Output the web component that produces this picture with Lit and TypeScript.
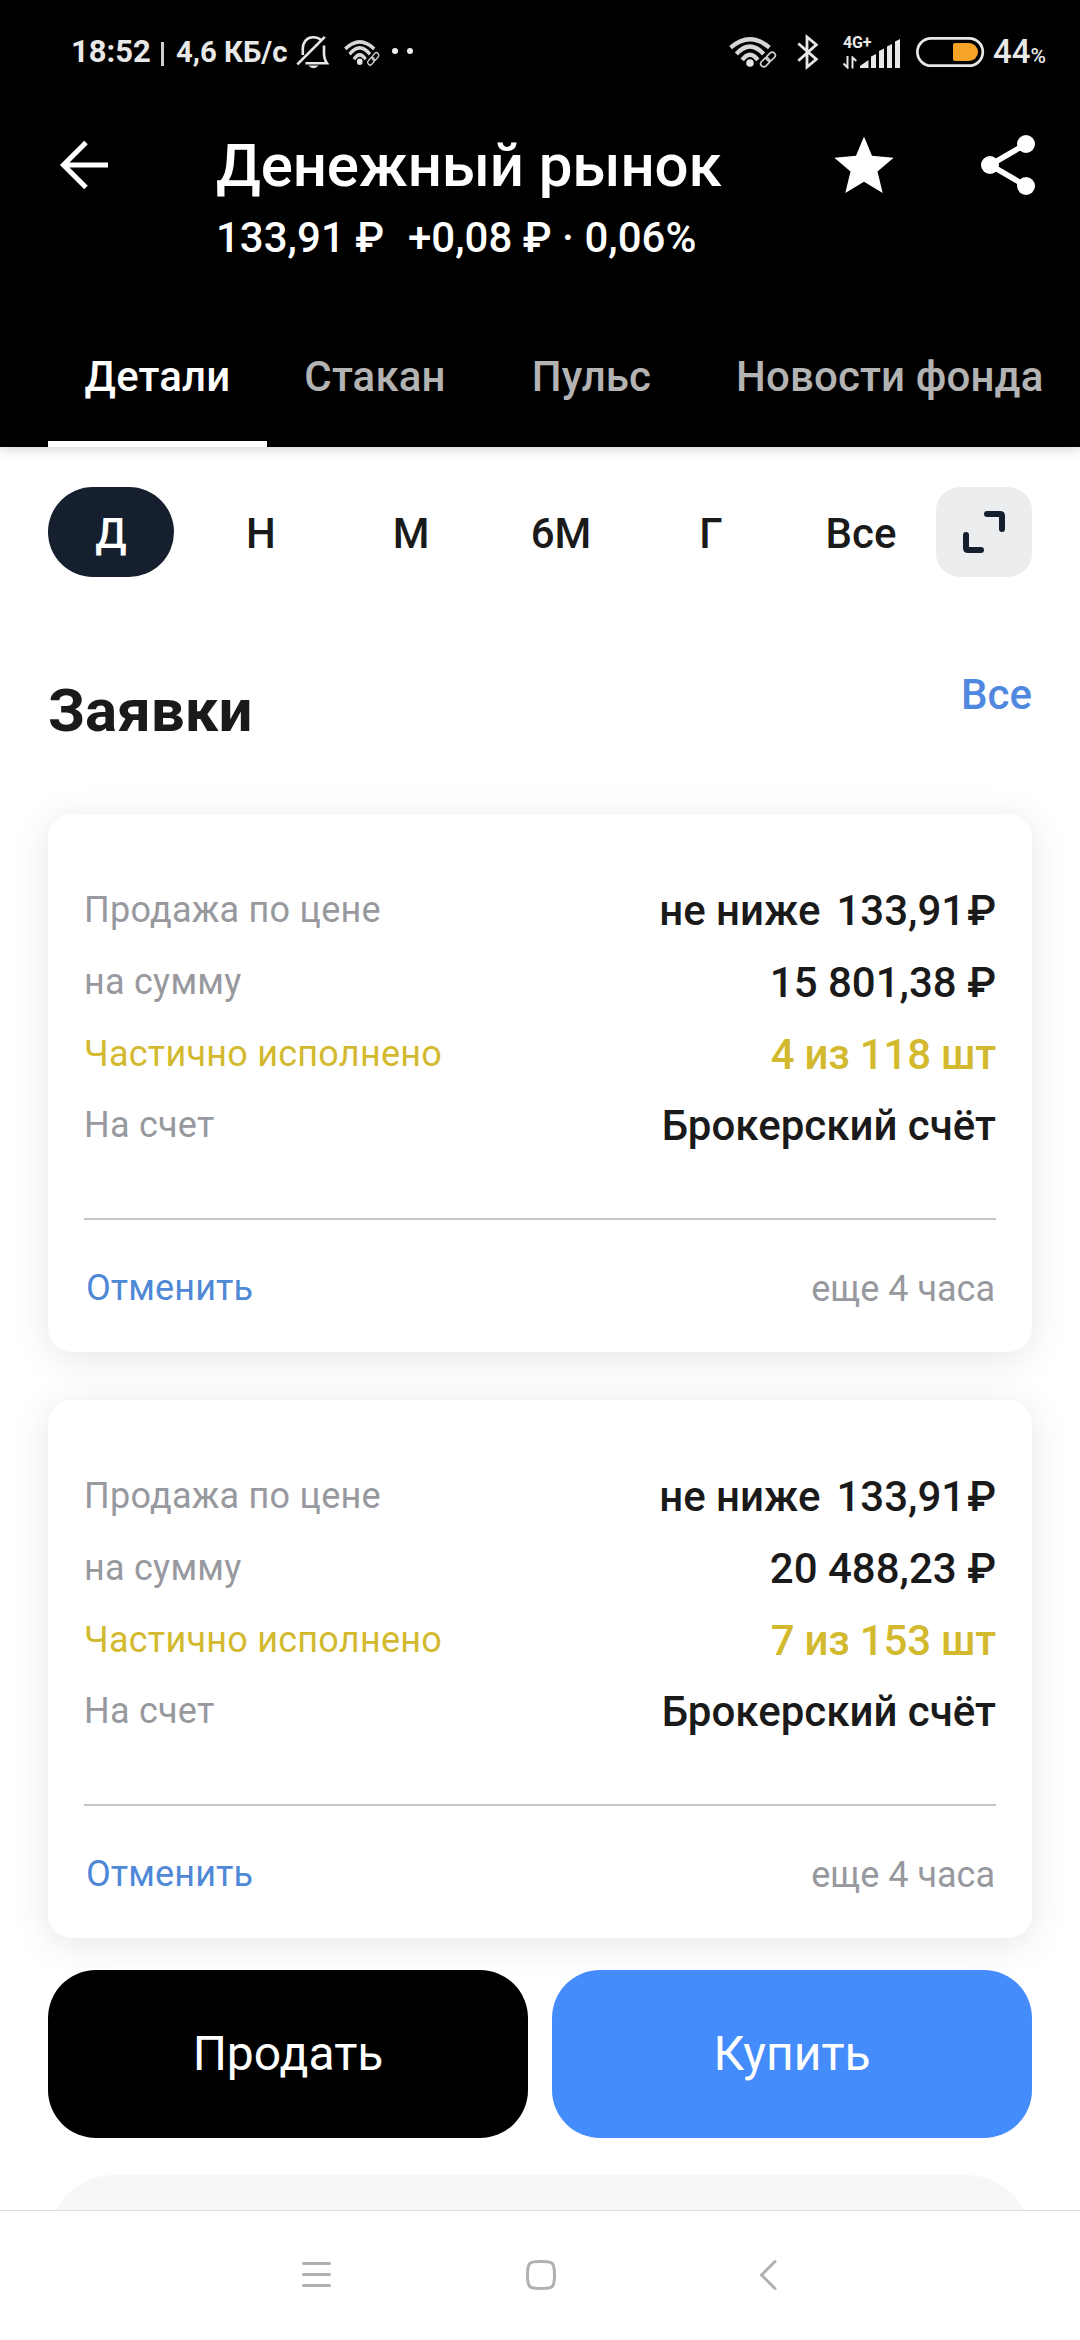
import { LitElement, html, svg, css } from "lit";
import { customElement, property, state } from "lit/decorators.js";
import { classMap } from "lit/directives/class-map.js";

interface Order {
  price: string;
  sum: string;
  filled: string;
  account: string;
  left: string;
}

const ORDERS: Order[] = [
  { price: "133,91", sum: "15 801,38 ₽", filled: "4 из 118 шт", account: "Брокерский счёт", left: "еще 4 часа" },
  { price: "133,91", sum: "20 488,23 ₽", filled: "7 из 153 шт", account: "Брокерский счёт", left: "еще 4 часа" },
];

const TABS = ["Детали", "Стакан", "Пульс", "Новости фонда"];
const PERIODS = ["Д", "Н", "М", "6М", "Г", "Все"];

const wifiShapes = svg`
  <g fill="none" stroke="#d6d6d6" stroke-width="4.3">
    <path d="M729.6 46.6 Q749 30 768.4 46.6" />
    <path d="M735.4 53 Q749 38 762.6 53" />
    <path d="M741.2 59 Q749 48.5 756.8 59" />
  </g>
  <circle cx="749" cy="62" r="3.8" fill="#e4e4e4" />
  <g transform="rotate(-45 767 58.5)">
    <rect x="757" y="53.6" width="20" height="10" rx="5" fill="#000" />
    <g fill="none" stroke="#d0d0d0" stroke-width="1.7">
      <rect x="758" y="55.4" width="10" height="6.2" rx="3.1" />
      <rect x="766" y="55.4" width="10" height="6.2" rx="3.1" />
    </g>
  </g>`;

@customElement("status-bar")
export class StatusBar extends LitElement {
  static styles = css`
    :host {
      display: flex;
      align-items: center;
      height: 104px;
      padding: 0 35px 0 71px;
      box-sizing: border-box;
      color: #e8e8e8;
      font-weight: 700;
      line-height: 40px;
    }
    svg {
      display: block;
      flex: none;
    }
    .time {
      font-size: 31px;
    }
    .bar {
      width: 3px;
      height: 24px;
      margin: 3px 12px 0 10px;
      background: #d0d0d0;
    }
    .speed {
      font-size: 29.3px;
      width: 111px;
      white-space: nowrap;
    }
    .bell {
      margin-left: 8px;
    }
    .wifi-small {
      margin-left: 15px;
    }
    .dots {
      margin-left: 11px;
    }
    .spacer {
      flex: 1;
    }
    .bt {
      margin-left: 19px;
    }
    .cell {
      display: flex;
      align-items: flex-end;
      margin-left: 24px;
    }
    .net {
      display: flex;
      flex-direction: column;
      gap: 6px;
      width: 17px;
    }
    .gen {
      font-size: 16px;
      line-height: 14px;
      letter-spacing: -0.2px;
      white-space: nowrap;
    }
    .battery {
      margin-left: 15px;
    }
    .level {
      display: flex;
      align-items: baseline;
      width: 52px;
      margin-left: 8px;
      font-weight: 500;
      font-size: 33px;
    }
    .percent {
      font-size: 21px;
      line-height: 21px;
    }
  `;

  render() {
    return html`
      <span class="time">18:52</span>
      <span class="bar"></span>
      <span class="speed">4,6 КБ/с</span>
      <svg class="bell" width="34" height="34" viewBox="294 34 34 34" fill="none" stroke="#e8e8e8" stroke-width="2.6">
        <path d="M301.8 54V48C301.8 40.500 306.200 36.300 312 36.300C315 36.300 318 37.200 320 39" />
        <path d="M323 44.500V52C323 57 324.300 60 326 62.200H304.500" />
        <path d="M296.300 63.300L323.800 35.800" />
        <path d="M307.500 64.600H317.500Q315.500 67.200 312.500 67.200T307.500 64.600Z" fill="#e8e8e8" stroke="none" />
      </svg>
      <svg class="wifi-small" width="36" height="27" viewBox="728 35 48 32" preserveAspectRatio="none">${wifiShapes}</svg>
      <svg class="dots" width="22" height="8" viewBox="0 0 22 8" fill="#f0f0f0">
        <circle cx="4" cy="3" r="3" /><circle cx="19" cy="3" r="3" />
      </svg>
      <span class="spacer"></span>
      <svg width="48" height="32" viewBox="728 35 48 32">${wifiShapes}</svg>
      <svg class="bt" width="23" height="36" viewBox="795 33 23 36" fill="none" stroke="#e8e8e8" stroke-width="2.8">
        <path d="M797.300 42.500L815.300 58.300L806 66V36L815.300 43.700L797.300 59.800" />
      </svg>
      <div class="cell">
        <div class="net">
          <span class="gen">4G+</span>
          <svg width="14" height="13" viewBox="842 53 14 13" fill="none" stroke="#e8e8e8" stroke-width="2">
            <path d="M846.500 53V64.500L842.500 60.500M851.500 65.500V54.500L855.300 58" />
          </svg>
        </div>
        <svg width="41" height="30" viewBox="859 36 41 30" fill="#e8e8e8">
          <path
            d="M859 65V63L867.500 57V65ZM870 65V53.500L875 51V65ZM878 65V48L883 45.500V65ZM886 65V43.500L891 41V65ZM894 65V38.500L899 36V65Z"
          />
        </svg>
      </div>
      <svg class="battery" width="69" height="32" viewBox="915 35 69 32">
        <rect x="916.400" y="37.300" width="65.400" height="27.400" rx="13.700" fill="none" stroke="#e8e8e8" stroke-width="2.700" />
        <path d="M954 42H968A9 9 0 0 1 968 60H954Q952 60 952 58V44Q952 42 954 42Z" fill="#f6a428" />
      </svg>
      <div class="level"><span>44</span><span class="percent">%</span></div>
    `;
  }
}

@customElement("fund-header")
export class FundHeader extends LitElement {
  @state() private active = 0;

  static styles = css`
    :host {
      display: block;
      height: 447px;
      background: #000;
      color: #fff;
      box-shadow: 0 3px 12px rgba(0, 0, 0, 0.16);
    }
    .toolbar {
      display: flex;
      height: 171px;
      padding: 26px 45px 0 58px;
      box-sizing: border-box;
    }
    svg {
      display: block;
      flex: none;
    }
    .back {
      margin-top: 10px;
    }
    .titles {
      flex: 1;
      margin-left: 108px;
      font-weight: 500;
    }
    .title {
      margin: 0;
      font-size: 60px;
      font-weight: 500;
      line-height: 71px;
      letter-spacing: -0.15px;
    }
    .quote {
      display: flex;
      gap: 24px;
      font-size: 42px;
      line-height: 74px;
    }
    .star {
      margin-top: 5px;
    }
    .share {
      margin: 4px 0 0 85px;
    }
    .tabs {
      display: grid;
      grid-template-columns: 219px 216px 217px max-content;
      height: 141px;
      margin-top: 31px;
      padding-left: 48px;
      overflow: hidden;
    }
    .tab {
      box-sizing: border-box;
      padding: 0 36px;
      border-bottom: 6px solid transparent;
      border-top: 6px solid transparent;
      font-size: 42px;
      font-weight: 500;
      line-height: 129px;
      letter-spacing: 0.15px;
      text-align: center;
      white-space: nowrap;
      color: #b3b3b3;
    }
    .tab.active {
      color: #fff;
      border-bottom-color: #fff;
    }
  `;

  render() {
    return html`
      <status-bar></status-bar>
      <div class="toolbar">
        <svg class="back" width="50" height="50" viewBox="58 140 50 50" fill="none" stroke="#fff" stroke-width="5">
          <path d="M86 142.500L63.500 165L86 187.500M64 165H108" />
        </svg>
        <div class="titles">
          <h1 class="title">Денежный рынок</h1>
          <div class="quote"><span>133,91 ₽</span><span>+0,08 ₽ · 0,06%</span></div>
        </div>
        <svg class="star" width="60" height="60" viewBox="834 135 60 60" fill="#fff">
          <path
            d="M864 136.500L872 155.700L893.700 157.800L877.500 171.500L882.700 193L864 181.700L845.300 193L850.500 171.500L834.300 157.800L856 155.700Z"
          />
        </svg>
        <svg class="share" width="56" height="62" viewBox="979 134 56 62">
          <path d="M1026 144L990 165L1026 186" fill="none" stroke="#fff" stroke-width="5.600" />
          <circle cx="1026" cy="144" r="9" fill="#fff" />
          <circle cx="990" cy="165" r="9" fill="#fff" />
          <circle cx="1026" cy="186" r="9" fill="#fff" />
        </svg>
      </div>
      <div class="tabs">
        ${TABS.map(
          (t, i) => html`<div class=${classMap({ tab: true, active: i === this.active })} @click=${() => (this.active = i)}>${t}</div>`,
        )}
      </div>
    `;
  }
}

@customElement("period-picker")
export class PeriodPicker extends LitElement {
  @state() private active = 0;

  static styles = css`
    :host {
      display: flex;
      padding: 40px 48px 0;
    }
    .list {
      display: flex;
      gap: 24px;
      flex: 1;
      min-width: 0;
    }
    .period {
      flex: none;
      width: 126px;
      border-radius: 45px;
      font-size: 42px;
      font-weight: 500;
      line-height: 94px;
      height: 90px;
      text-align: center;
      color: #1a1a1a;
    }
    .period.active {
      background: #151f2d;
      color: #fff;
    }
    .expand {
      display: flex;
      align-items: center;
      justify-content: center;
      width: 96px;
      height: 90px;
      border-radius: 24px;
      background: #ebedee;
    }
  `;

  render() {
    return html`
      <div class="list">
        ${PERIODS.map(
          (p, i) => html`<div class=${classMap({ period: true, active: i === this.active })} @click=${() => (this.active = i)}>${p}</div>`,
        )}
      </div>
      <div class="expand">
        <svg
          width="42"
          height="42"
          viewBox="0 0 42 42"
          fill="none"
          stroke="#151f2d"
          stroke-width="6"
          stroke-linecap="round"
          stroke-linejoin="round"
        >
          <path d="M24 3H37Q39 3 39 5V18M3 24V37Q3 39 5 39H18" />
        </svg>
      </div>
    `;
  }
}

@customElement("order-card")
export class OrderCard extends LitElement {
  @property({ attribute: false }) order!: Order;

  static styles = css`
    :host {
      display: block;
      height: 538px;
      box-sizing: border-box;
      padding: 61px 36px 0;
      border-radius: 24px;
      background: #fff;
      box-shadow: 0 6px 38px rgba(0, 0, 0, 0.1);
    }
    .row,
    .footer {
      display: flex;
      justify-content: space-between;
      line-height: 71.75px;
      font-size: 36px;
      letter-spacing: 0.25px;
      color: #97999e;
    }
    .value {
      display: flex;
      font-size: 42px;
      font-weight: 500;
      letter-spacing: 0;
      color: #1a1a1a;
    }
    .price {
      margin: 0 2px 0 16px;
    }
    .partial,
    .partial .value {
      color: #d3b92e;
    }
    .partial .value {
      letter-spacing: -0.2px;
    }
    .divider {
      height: 2px;
      margin-top: 56px;
      background: #c6c6c9;
    }
    .footer {
      padding: 33px 1px 0 2px;
    }
    .cancel {
      line-height: 70px;
      letter-spacing: 0.1px;
      color: #4f88d6;
    }
    .left {
      letter-spacing: 0;
      line-height: 72px;
    }
  `;

  render() {
    const o = this.order;
    return html`
      <div class="row">
        <span>Продажа по цене</span>
        <span class="value"><span>не ниже</span><span class="price">${o.price}</span><span>₽</span></span>
      </div>
      <div class="row"><span>на сумму</span><span class="value">${o.sum}</span></div>
      <div class="row partial"><span>Частично исполнено</span><span class="value">${o.filled}</span></div>
      <div class="row"><span>На счет</span><span class="value">${o.account}</span></div>
      <div class="divider"></div>
      <div class="footer"><span class="cancel">Отменить</span><span class="left">${o.left}</span></div>
    `;
  }
}

@customElement("system-nav")
export class SystemNav extends LitElement {
  static styles = css`
    :host {
      display: flex;
      height: 130px;
      box-sizing: border-box;
      padding: 48px 0 0 300px;
      border-top: 1px solid #dedede;
      background: #fff;
    }
    svg {
      display: block;
    }
    .home {
      margin: 0 202px 0 193px;
    }
  `;

  render() {
    return html`
      <svg width="32" height="32" viewBox="0 0 32 32" fill="none" stroke="#b0b0b0" stroke-width="3" stroke-linecap="round">
        <path d="M3.500 4.500H29.500M3.500 15.500H29.500M3.500 26.500H29.500" />
      </svg>
      <svg class="home" width="32" height="32" viewBox="0 0 32 32" fill="none" stroke="#b0b0b0" stroke-width="3">
        <path d="M16 2.500C27.500 2.500 29.500 3 29.500 16S27.500 29.500 16 29.500S2.500 29 2.500 16S4.500 2.500 16 2.500Z" />
      </svg>
      <svg width="18" height="32" viewBox="0 0 18 32" fill="none" stroke="#b0b0b0" stroke-width="3" stroke-linecap="round">
        <path d="M16 2.500L2.500 16L16 29.500" />
      </svg>
    `;
  }
}

@customElement("app-root")
export class AppRoot extends LitElement {
  static styles = css`
    :host {
      display: flex;
      flex-direction: column;
      width: 1080px;
      height: 2340px;
      overflow: hidden;
      background: #fff;
      font-family: Roboto, "Noto Sans", sans-serif;
    }
    fund-header,
    system-nav {
      flex: none;
    }
    main {
      flex: 1;
      min-height: 0;
      overflow: hidden;
    }
    fund-header {
      position: relative;
      z-index: 1;
    }
    .section {
      display: flex;
      justify-content: space-between;
      height: 145px;
      margin-top: 92px;
      padding: 0 48px;
    }
    .heading {
      margin: 6px 0 0;
      font-size: 60px;
      font-weight: 700;
      line-height: 71px;
      color: #1a1a1a;
    }
    .all {
      font-size: 42px;
      font-weight: 500;
      line-height: 52px;
      color: #4f88de;
    }
    .orders {
      display: flex;
      flex-direction: column;
      gap: 48px;
      padding: 0 48px;
    }
    .actions {
      display: grid;
      grid-template-columns: 1fr 1fr;
      gap: 24px;
      margin-top: 32px;
      padding: 0 48px;
    }
    .action {
      height: 168px;
      border-radius: 48px;
      font-size: 48px;
      line-height: 168px;
      text-align: center;
      color: #fff;
    }
    .sell {
      background: #000;
    }
    .buy {
      background: #448cfb;
    }
    .panel {
      height: 200px;
      margin: 37px 48px 0;
      border-radius: 66px;
      background: #f5f7f9;
    }
  `;

  render() {
    return html`
      <fund-header></fund-header>
      <main>
        <period-picker></period-picker>
        <div class="section">
          <h2 class="heading">Заявки</h2>
          <span class="all">Все</span>
        </div>
        <div class="orders">${ORDERS.map((o) => html`<order-card .order=${o}></order-card>`)}</div>
        <div class="actions">
          <div class="action sell">Продать</div>
          <div class="action buy">Купить</div>
        </div>
        <div class="panel"></div>
      </main>
      <system-nav></system-nav>
    `;
  }
}
